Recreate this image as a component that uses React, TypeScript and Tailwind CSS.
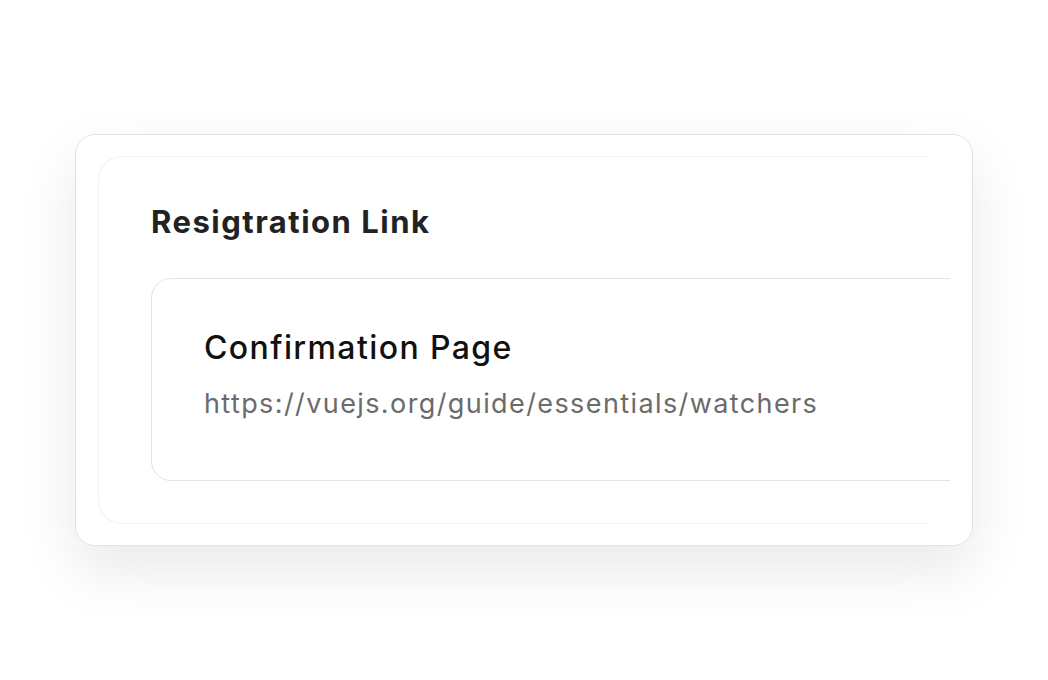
import React from "react";

export default function App() {
  return (
    <div className="min-h-[680px] w-full bg-white flex items-start justify-center pt-[134px]" style={{ fontFamily: "Inter, 'Liberation Sans', sans-serif" }}>
      {/* Outer card */}
      <div className="w-[898px] h-[412px] rounded-[20px] border border-[#e4e4e4] bg-white shadow-[0_24px_60px_rgba(0,0,0,0.09)] pl-[22px] pr-[22px] pt-[21px] pb-[21px]">
        <div className="h-full w-full overflow-hidden">
          {/* Inner panel */}
          <div className="h-full w-[830px] rounded-l-[24px] border-l border-t border-b border-[#f2f2f2] pl-[52px] pt-[45px]">
            <h2 className="text-[31px] font-bold leading-[40px] tracking-[1.5px] text-[#222222]">
              Resigtration Link
            </h2>
            <div className="mt-[36px] w-[900px] h-[203px] rounded-[20px] border border-[#e4e4e4] bg-white pl-[52px] pt-[49px]">
              <div className="text-[32px] font-medium leading-[40px] tracking-[1.4px] text-[#111111]">
                Confirmation Page
              </div>
              <div className="mt-[19px] text-[27px] leading-[34px] tracking-[1.4px] text-[#6b6b6b]">
                https://vuejs.org/guide/essentials/watchers
              </div>
            </div>
          </div>
        </div>
      </div>
    </div>
  );
}
